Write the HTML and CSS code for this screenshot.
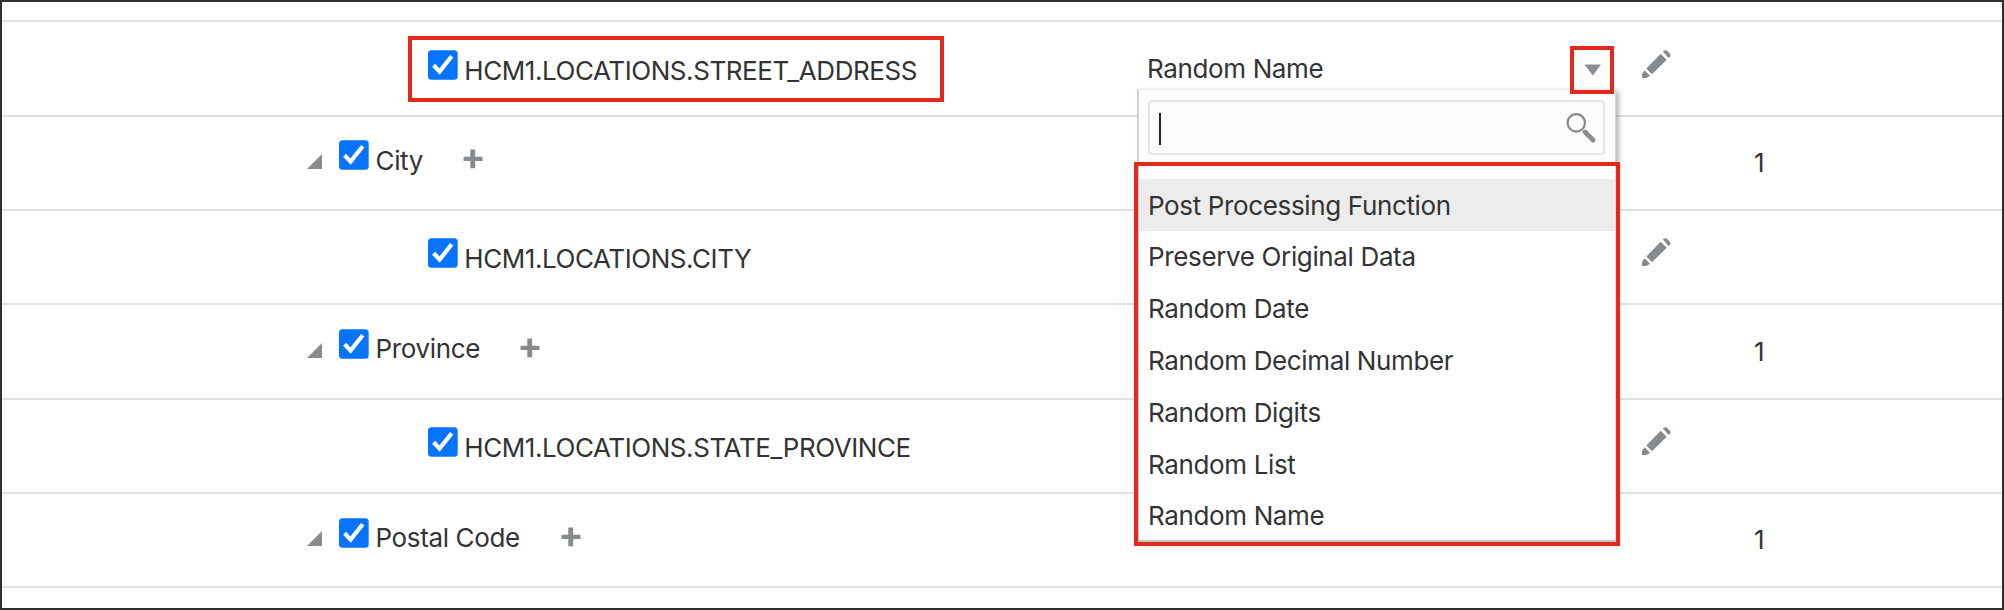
FILE: index.html
```html
<!DOCTYPE html>
<html lang="en">
<head>
<meta charset="utf-8">
<title>Masking columns</title>
<link rel="stylesheet" href="styles.css">
</head>
<body>
<svg class="defs" width="0" height="0" aria-hidden="true">
  <symbol id="check" viewBox="0 0 30 30"><rect x="0" y="0.3" width="29.7" height="29.4" rx="3.5" fill="#0774ff"/><path d="M5.6 15.2l6 6.400L23.700 6.300" fill="none" stroke="#fff" stroke-width="4.200"/></symbol>
  <symbol id="plus" viewBox="0 0 20 20"><path d="M7.800 0.500h3.900q.5 0 .5.500v6.800h6.800q.5 0 .5.500v3.200q0 .5-.5.500h-6.800v6.800q0 .5-.5.500h-3.900q-.5 0-.5-.5v-6.800h-6.300q-.5 0-.5-.5V8.300q0-.5.5-.5h6.300V1q0-.5.5-.5z" fill="#878b8e"/></symbol>
  <symbol id="pencil" viewBox="0 0 30 30"><path d="M20.800 1.600Q23 -.8 25 .8l2.700 2.700q1.500 1.800.2 3.400L26.600 8z M18.700 3.700l6 6.100L10 24.300l-5.700-5.800z M2.500 20.300l5.600 5.500-3.700 2.300H0v-4z" fill="#878b8e"/></symbol>
</svg>
<main class="table">
  <div class="row leaf">
    <div class="tree">
      <svg class="check"><use href="#check"/></svg><span class="label street">HCM1.LOCATIONS.STREET_ADDRESS</span>
    </div>
    <div class="method"><span>Random Name</span><svg class="arrow" viewBox="0 0 18 12"><path d="M0.500 0.500h16.500L8.800 11.500z" fill="#8a8d8f"/></svg></div>
    <svg class="pencil"><use href="#pencil"/></svg>
  </div>
  <div class="row group">
    <div class="tree"><svg class="caret" viewBox="0 0 15 15"><path d="M15 0v15H0z" fill="#8a8b8d"/></svg><svg class="check"><use href="#check"/></svg><span class="label city">City</span><svg class="plus"><use href="#plus"/></svg></div>
    <span class="count">1</span>
  </div>
  <div class="row leaf">
    <div class="tree"><svg class="check"><use href="#check"/></svg><span class="label">HCM1.LOCATIONS.CITY</span></div>
    <svg class="pencil"><use href="#pencil"/></svg>
  </div>
  <div class="row group">
    <div class="tree"><svg class="caret" viewBox="0 0 15 15"><path d="M15 0v15H0z" fill="#8a8b8d"/></svg><svg class="check"><use href="#check"/></svg><span class="label province">Province</span><svg class="plus"><use href="#plus"/></svg></div>
    <span class="count">1</span>
  </div>
  <div class="row leaf">
    <div class="tree"><svg class="check"><use href="#check"/></svg><span class="label">HCM1.LOCATIONS.STATE_PROVINCE</span></div>
    <svg class="pencil"><use href="#pencil"/></svg>
  </div>
  <div class="row group">
    <div class="tree"><svg class="caret" viewBox="0 0 15 15"><path d="M15 0v15H0z" fill="#8a8b8d"/></svg><svg class="check"><use href="#check"/></svg><span class="label postal">Postal Code</span><svg class="plus"><use href="#plus"/></svg></div>
    <span class="count">1</span>
  </div>
  <div class="row last"></div>
</main>
<div class="popup">
  <div class="search"><span class="cursor"></span><svg class="lens" viewBox="0 0 30 30"><circle cx="10.300" cy="9.800" r="8.700" fill="none" stroke="#8a8d8f" stroke-width="2.300"/><path d="M19 19l8 8" stroke="#8a8d8f" stroke-width="4.800" stroke-linecap="round"/></svg></div>
  <ul class="options">
    <li class="active">Post Processing Function</li>
    <li>Preserve Original Data</li>
    <li>Random Date</li>
    <li>Random Decimal Number</li>
    <li>Random Digits</li>
    <li>Random List</li>
    <li>Random Name</li>
  </ul>
</div>
<div class="mark mark-column"></div>
<div class="mark mark-arrow"></div>
<div class="mark mark-options"></div>
</body>
</html>
```
FILE: styles.css
```css
* { box-sizing: border-box; }
body {
  margin: 0;
  position: relative;
  width: 2004px;
  height: 610px;
  overflow: hidden;
  background: #fff;
  color: #333;
  font: 26px/30px Inter, "Liberation Sans", sans-serif;
  letter-spacing: -.36px;
}
svg { display: block; flex: none; }
.defs { position: absolute; }
.table {
  height: 610px;
  padding-top: 18.330px;
  border: 2px solid #303033;
  overflow: hidden;
}
.row {
  display: grid;
  grid-template-columns: 1144px 496px 112px 1fr;
  align-items: start;
  height: 94.330px;
  border-top: 2px solid #e1e1e1;
}
.tree { grid-column: 1; display: flex; align-items: flex-start; white-space: nowrap; }
.leaf .tree { padding: 27.400px 0 0 426px; }
.group .tree { padding: 23.700px 0 0 305px; }
.check { width: 30px; height: 30px; }
.leaf .label { margin: 6px 0 0 6.300px; letter-spacing: -.43px; }
.group .label { margin: 5.300px 0 0 6.500px; }
.caret { width: 15px; height: 15px; margin: 13.500px 17px 0 0; }
.plus { width: 20px; height: 20px; margin-top: 9px; }
.city { width: 87px; }
.province { width: 144.500px; }
.postal { width: 185px; }
.method { grid-column: 2; display: flex; padding: 32px 0 0 1px; }
.arrow { width: 18px; height: 12px; margin: 10px 0 0 auto; }
.method .arrow { margin-right: 40.500px; }
.pencil { grid-column: 3; width: 30px; height: 30px; margin-top: 27.300px; }
.count { grid-column: 4; margin-top: 31.500px; }

.popup {
  position: absolute;
  left: 1137px;
  top: 89px;
  width: 479px;
  height: 453px;
  padding: 10px;
  border: 2px solid #d0d2d3;
  border-top: 1px solid #eee;
  border-right: 1px solid #d8d9da;
  border-bottom: 2px solid #c4c5c6;
  background: #fcfcfc;
  box-shadow: 3px 2px 5px rgba(0, 0, 0, .28);
}
.search {
  display: flex;
  width: 457px;
  height: 55px;
  margin-left: -1px;
  padding: 10.500px 7px 0 9px;
  border: 2px solid #e4e7e7;
  border-radius: 4px;
}
.cursor { width: 2px; height: 32px; background: #222; }
.lens { width: 30px; height: 30px; margin-left: auto; }
.options {
  margin: 7px -10px 0;
  padding: 17px 0 0;
  list-style: none;
  height: 378px;
  background: #fff;
}
.options li { height: 51.800px; padding: 11.700px 8px 0 9px; white-space: nowrap; }
.options .active { background: #ececec; }

/* Callout frames over the page */
.mark { position: absolute; border: 4px solid #e4281b; }
.mark-column { left: 408px; top: 36px; width: 536px; height: 66px; }
.mark-arrow { left: 1570px; top: 46px; width: 44px; height: 48px; }
.mark-options { left: 1134px; top: 162px; width: 486px; height: 384px; }
```
